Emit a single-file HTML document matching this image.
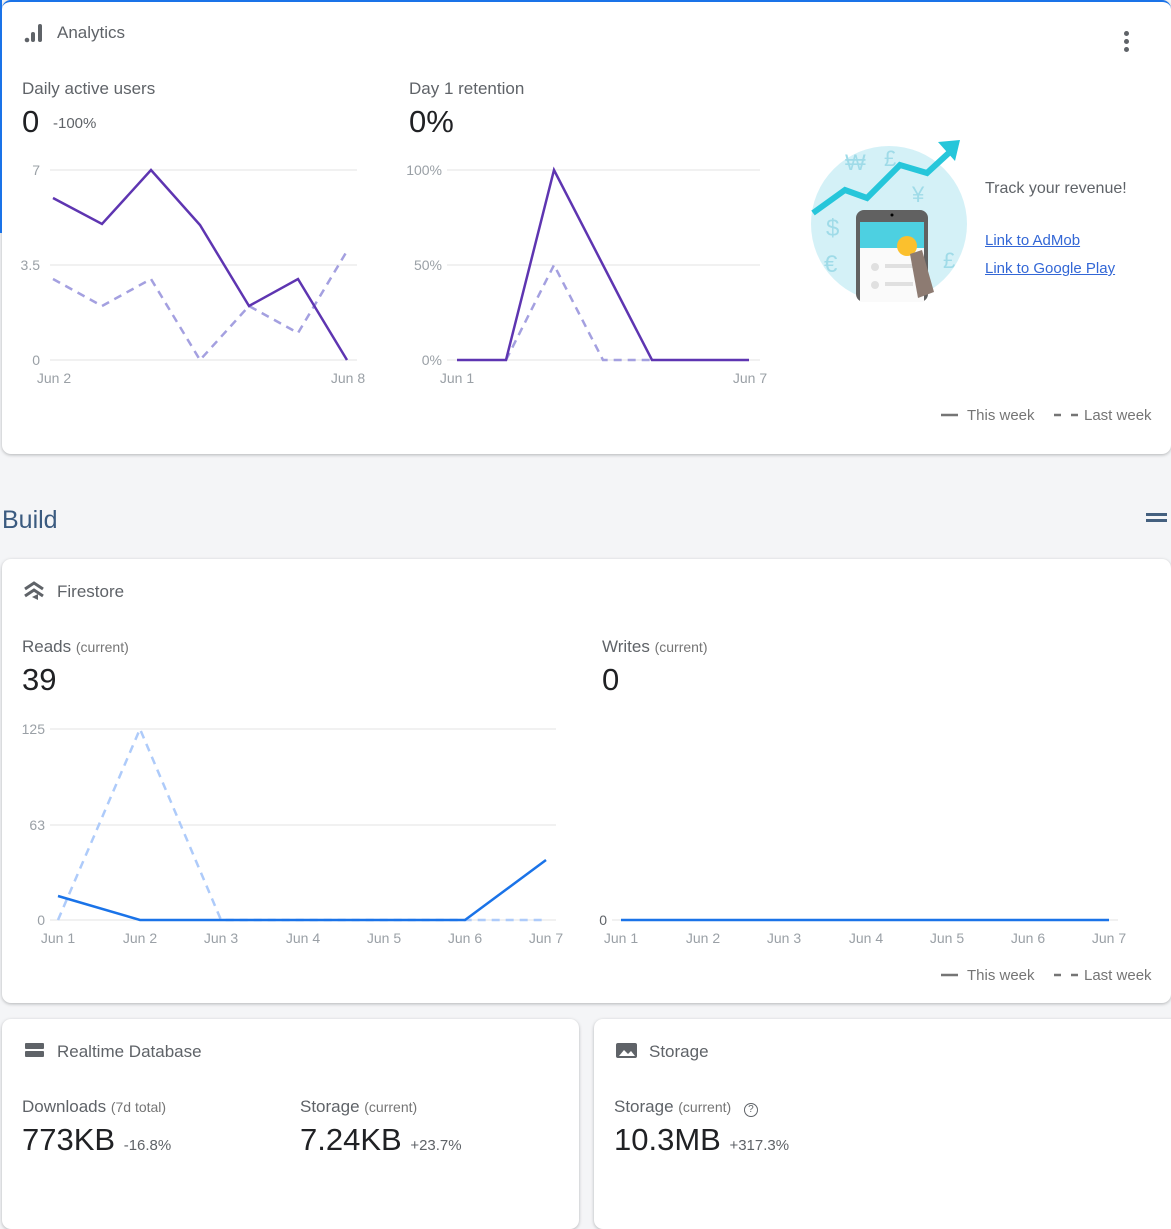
<!DOCTYPE html>
<html><head><meta charset="utf-8"><style>
body{margin:0;width:1171px;height:1209px;background:#f4f5f7;font-family:"Liberation Sans",sans-serif;position:relative;overflow:hidden;color:#3c4043}
.card{position:absolute;background:#fff;border-radius:9px;box-shadow:0 1px 3px rgba(60,64,67,.35)}
.t{position:absolute;white-space:nowrap}
.title{font-size:17px;color:#5f6368}
.lab{font-size:17px;color:#5f6368}
.small{font-size:14px;color:#757575}
.big{font-size:31px;color:#202124}
.pct{font-size:15px;color:#5f6368}
a{color:#3367d6;text-decoration:underline}
svg text{font-family:"Liberation Sans",sans-serif;font-size:14px;fill:#9aa0a6}
</style></head><body>
<div class="card" style="left:2px;top:0;width:1169px;height:454px;border-top:2px solid #1a73e8;box-sizing:border-box"></div>
<div style="position:absolute;left:0;top:0;width:2px;height:233px;background:#1a73e8"></div>
<div class="card" style="left:2px;top:559px;width:1169px;height:444px"></div>
<div class="card" style="left:2px;top:1019px;width:577px;height:210px"></div>
<div class="card" style="left:594px;top:1019px;width:590px;height:210px"></div>

<div class="t title" style="left:57px;top:23px">Analytics</div>
<div class="t" style="left:1124px;top:31px;width:5px;"><div style="width:5px;height:5px;border-radius:3px;background:#5f6368;margin-bottom:3px"></div><div style="width:5px;height:5px;border-radius:3px;background:#5f6368;margin-bottom:3px"></div><div style="width:5px;height:5px;border-radius:3px;background:#5f6368"></div></div>
<div class="t lab" style="left:22px;top:79px">Daily active users</div>
<div class="t big" style="left:22px;top:104px">0</div>
<div class="t pct" style="left:53px;top:115px">-100%</div>
<div class="t lab" style="left:409px;top:79px">Day 1 retention</div>
<div class="t big" style="left:409px;top:104px">0%</div>
<div class="t" style="left:985px;top:180px;font-size:16px;color:#5f6368">Track your revenue!</div>
<div class="t" style="left:985px;top:232px;font-size:15px"><a>Link to AdMob</a></div>
<div class="t" style="left:985px;top:260px;font-size:15px"><a>Link to Google Play</a></div>

<div class="t" style="left:2px;top:506px;font-size:25px;color:#3b5b80">Build</div>
<div class="t" style="left:1146px;top:513px;width:21px;height:3px;background:#44607f;box-shadow:0 6px 0 #44607f"></div>

<div class="t title" style="left:57px;top:582px">Firestore</div>
<div class="t lab" style="left:22px;top:637px">Reads <span class="small">(current)</span></div>
<div class="t big" style="left:22px;top:662px">39</div>
<div class="t lab" style="left:602px;top:637px">Writes <span class="small">(current)</span></div>
<div class="t big" style="left:602px;top:662px">0</div>

<div class="t title" style="left:57px;top:1042px">Realtime Database</div>
<div class="t lab" style="left:22px;top:1097px">Downloads <span class="small">(7d total)</span></div>
<div class="t big" style="left:22px;top:1122px">773KB <span class="pct">-16.8%</span></div>
<div class="t lab" style="left:300px;top:1097px">Storage <span class="small">(current)</span></div>
<div class="t big" style="left:300px;top:1122px">7.24KB <span class="pct">+23.7%</span></div>
<div class="t title" style="left:649px;top:1042px">Storage</div>
<div class="t lab" style="left:614px;top:1097px">Storage <span class="small">(current)</span> <span style="display:inline-block;width:12px;height:12px;border:1.5px solid #5f6368;border-radius:50%;font-size:10px;text-align:center;line-height:12px;margin-left:8px">?</span></div>
<div class="t big" style="left:614px;top:1122px">10.3MB <span class="pct">+317.3%</span></div>

<svg width="1171" height="1209" style="position:absolute;left:0;top:0">
<g fill="#5f6368"><circle cx="27" cy="40" r="2.3"/><rect x="31" y="32" width="4" height="10" rx="2"/><rect x="38" y="24" width="4" height="18" rx="2"/></g>
<g fill="none" stroke="#5f6368" stroke-width="3"><path d="M25 589 L34 583 L43 589"/><path d="M25 596 L34 590 L43 596"/></g><path d="M32 597 L38 594 L38 600Z" fill="#5f6368"/>
<g fill="#5f6368"><rect x="25" y="1043" width="19" height="6" rx="1"/><rect x="25" y="1051" width="19" height="6" rx="1"/></g>
<rect x="616" y="1043" width="21" height="15" rx="2" fill="#5f6368"/><path d="M619 1056 L624 1050 L628 1054 L631 1051 L635 1056Z" fill="#fff"/>
<g stroke="#e3e3e3"><line x1="50" y1="170" x2="357" y2="170"/><line x1="50" y1="265" x2="357" y2="265"/><line x1="50" y1="360" x2="357" y2="360"/><line x1="447" y1="170" x2="760" y2="170"/><line x1="447" y1="265" x2="760" y2="265"/><line x1="447" y1="360" x2="760" y2="360"/>
<line x1="50" y1="729" x2="556" y2="729"/><line x1="50" y1="825" x2="556" y2="825"/><line x1="50" y1="920" x2="556" y2="920"/><line x1="612" y1="920" x2="1118" y2="920"/></g>
<text x="40" y="175" text-anchor="end">7</text><text x="40" y="270" text-anchor="end">3.5</text><text x="40" y="365" text-anchor="end">0</text>
<text x="54" y="383" text-anchor="middle">Jun 2</text><text x="348" y="383" text-anchor="middle">Jun 8</text>
<polyline fill="none" stroke="#a4a0e0" stroke-width="2.5" stroke-dasharray="8,6" points="53,279 102,306 151,279 200,360 249,306 298,333 347,251"/>
<polyline fill="none" stroke="#5e35b1" stroke-width="2.5" points="53,198 102,224 151,170 200,225 249,306 298,279 347,360"/>
<text x="442" y="175" text-anchor="end">100%</text><text x="442" y="270" text-anchor="end">50%</text><text x="442" y="365" text-anchor="end">0%</text>
<text x="457" y="383" text-anchor="middle">Jun 1</text><text x="750" y="383" text-anchor="middle">Jun 7</text>
<polyline fill="none" stroke="#a4a0e0" stroke-width="2.5" stroke-dasharray="8,6" points="506,360 554,265 603,360 652,360"/>
<polyline fill="none" stroke="#5e35b1" stroke-width="2.5" points="457,360 506,360 554,170 603,265 652,360 700,360 749,360"/>
<g stroke="#757575" stroke-width="2.5"><line x1="941" y1="415" x2="958" y2="415"/><line x1="1054" y1="415" x2="1061" y2="415"/><line x1="1071" y1="415" x2="1078" y2="415"/>
<line x1="941" y1="975" x2="958" y2="975"/><line x1="1054" y1="975" x2="1061" y2="975"/><line x1="1071" y1="975" x2="1078" y2="975"/></g>
<text x="967" y="420" style="fill:#757575;font-size:15px">This week</text><text x="1084" y="420" style="fill:#757575;font-size:15px">Last week</text>
<text x="967" y="980" style="fill:#757575;font-size:15px">This week</text><text x="1084" y="980" style="fill:#757575;font-size:15px">Last week</text>
<text x="45" y="734" text-anchor="end">125</text><text x="45" y="830" text-anchor="end">63</text><text x="45" y="925" text-anchor="end">0</text>
<g text-anchor="middle"><text x="58" y="943">Jun 1</text><text x="140" y="943">Jun 2</text><text x="221" y="943">Jun 3</text><text x="303" y="943">Jun 4</text><text x="384" y="943">Jun 5</text><text x="465" y="943">Jun 6</text><text x="546" y="943">Jun 7</text>
<text x="621" y="943">Jun 1</text><text x="703" y="943">Jun 2</text><text x="784" y="943">Jun 3</text><text x="866" y="943">Jun 4</text><text x="947" y="943">Jun 5</text><text x="1028" y="943">Jun 6</text><text x="1109" y="943">Jun 7</text></g>
<polyline fill="none" stroke="#aecbfa" stroke-width="2.5" stroke-dasharray="8,6" points="58,920 140,729 221,920 303,920 384,920 465,920 546,920"/>
<polyline fill="none" stroke="#1a73e8" stroke-width="2.5" points="58,896 140,920 221,920 303,920 384,920 465,920 546,860"/>
<text x="607" y="925" text-anchor="end" style="fill:#5f6368">0</text>
<line x1="621" y1="920" x2="1109" y2="920" stroke="#1a73e8" stroke-width="2.5"/>
<circle cx="889" cy="224" r="78" fill="#d4f1f7"/>
<text x="845" y="170" style="fill:#9fdbe8;font-size:22px">₩</text><text x="884" y="166" style="fill:#9fdbe8;font-size:22px">£</text><text x="912" y="202" style="fill:#9fdbe8;font-size:22px">¥</text><text x="826" y="236" style="fill:#9fdbe8;font-size:24px">$</text><text x="824" y="272" style="fill:#9fdbe8;font-size:24px">€</text><text x="943" y="268" style="fill:#9fdbe8;font-size:22px">£</text>
<rect x="856" y="210" width="72" height="92" rx="8" fill="#616161"/>
<rect x="860" y="222" width="64" height="80" fill="#fafafa"/>
<rect x="860" y="222" width="64" height="26" fill="#4dd0e1"/>
<circle cx="892" cy="215" r="1.5" fill="#000"/>
<circle cx="875" cy="267" r="4" fill="#e0e0e0"/><rect x="885" y="264" width="28" height="4" fill="#e0e0e0"/>
<circle cx="875" cy="285" r="4" fill="#e0e0e0"/><rect x="885" y="282" width="28" height="4" fill="#e0e0e0"/>
<circle cx="907" cy="246" r="10" fill="#fbc02d"/>
<path d="M910 254 L922 250 L934 292 L918 298Z" fill="#8d7b72"/>
<polyline fill="none" stroke="#26c6da" stroke-width="6" points="813,213 845,190 867,198 900,165 927,173 952,150"/>
<path d="M938 142 L960 140 L955 161Z" fill="#26c6da"/>
</svg>
</body></html>
